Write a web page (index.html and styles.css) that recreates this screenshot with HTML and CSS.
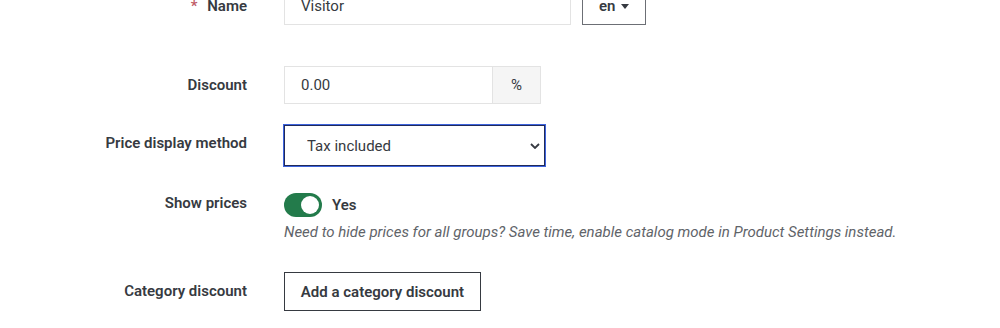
FILE: index.html
```html
<!DOCTYPE html>
<html lang="en">

<head>
    <meta charset="UTF-8">
    <title>Customer group</title>
    <link rel="stylesheet" href="styles.css">
</head>

<body>
    <form class="group-form">
        <div class="form-group form-group-name">
            <label class="control-label" for="name"><span class="required">*</span> Name</label>
            <div class="control">
                <input type="text" id="name" class="form-control input-name" value="Visitor">
                <button type="button" class="btn-lang">en <span class="caret"></span></button>
            </div>
        </div>

        <div class="form-group">
            <label class="control-label" for="discount">Discount</label>
            <div class="control">
                <div class="input-group">
                    <input type="text" id="discount" class="form-control input-discount" value="0.00">
                    <span class="input-addon">%</span>
                </div>
            </div>
        </div>

        <div class="form-group form-group-select">
            <label class="control-label" for="price_display">Price display method</label>
            <div class="control">
                <div class="select-wrap">
                    <select id="price_display" class="form-select">
                        <option>Tax included</option>
                        <option>Tax excluded</option>
                    </select>
                    <svg class="chevron" width="10" height="6" viewBox="0 0 10 6">
                        <path d="M1 1l4 4 4-4" fill="none" stroke="#363a41" stroke-width="1.8" />
                    </svg>
                </div>
            </div>
        </div>

        <div class="form-group form-group-switch">
            <label class="control-label">Show prices</label>
            <div class="control">
                <div class="switch-row">
                    <span class="switch"><span class="knob"></span></span>
                    <span class="switch-label">Yes</span>
                </div>
                <p class="help">Need to hide prices for all groups? Save time, enable catalog mode in Product Settings instead.</p>
            </div>
        </div>

        <div class="form-group">
            <label class="control-label">Category discount</label>
            <div class="control">
                <button type="button" class="btn-outline">Add a category discount</button>
            </div>
        </div>
    </form>
</body>

</html>
```

FILE: styles.css
```css
body {
    margin: 0;
    background: #fff;
    font-family: Roboto, "Noto Sans", sans-serif;
    font-size: 15px;
    color: #363a41;
}

.group-form {
    margin-top: -13px;
}

.form-group {
    display: flex;
    margin-bottom: 20px;
}

.form-group-name {
    margin-bottom: 41px;
}

.form-group-select {
    margin-top: 21px;
    margin-bottom: 27px;
}

.form-group-switch {
    margin-bottom: 30px;
}

.control-label {
    width: 247px;
    flex-shrink: 0;
    padding-top: 9px;
    text-align: right;
    font-weight: 600;
    line-height: 20px;
    box-sizing: border-box;
}

.form-group-select .control-label {
    padding-top: 8px;
}

.form-group-switch .control-label {
    padding-top: 0;
}

.required {
    color: #c05c67;
    margin-right: 6px;
}

.control {
    margin-left: 37px;
}

.form-group-name .control {
    display: flex;
    gap: 11px;
}

.form-control {
    height: 38px;
    padding: 0 16px;
    border: 1px solid #e3e3e3;
    font: inherit;
    color: #363a41;
    box-sizing: border-box;
    outline: none;
}

.input-name {
    width: 287px;
}

.btn-lang {
    width: 64px;
    height: 38px;
    border: 1px solid #6c6f75;
    background: #fff;
    font: inherit;
    font-weight: 600;
    color: #363a41;
    padding: 0;
}

.caret {
    display: inline-block;
    width: 0;
    height: 0;
    margin-left: 2px;
    vertical-align: 2px;
    border-left: 4px solid transparent;
    border-right: 4px solid transparent;
    border-top: 5px solid #363a41;
}

.input-group {
    display: flex;
}

.input-discount {
    width: 209px;
}

.input-addon {
    width: 48px;
    height: 38px;
    display: flex;
    align-items: center;
    justify-content: center;
    background: #f5f5f5;
    border: 1px solid #e3e3e3;
    border-left: 0;
    box-sizing: border-box;
}

.select-wrap {
    position: relative;
    width: 261px;
}

.form-select {
    appearance: none;
    width: 100%;
    height: 41px;
    padding: 0 22px;
    border: 1px solid #202a5a;
    box-shadow: 0 0 0 1px #3d63dd;
    background: #fff;
    font: inherit;
    color: #363a41;
    outline: none;
}

.chevron {
    position: absolute;
    right: 5px;
    top: 18px;
    pointer-events: none;
}

.switch-row {
    display: flex;
    align-items: center;
    height: 24px;
}

.switch {
    position: relative;
    width: 38px;
    height: 24px;
    border-radius: 12px;
    background: #237b4b;
}

.knob {
    position: absolute;
    right: 3px;
    top: 3px;
    width: 18px;
    height: 18px;
    border-radius: 50%;
    background: #fff;
}

.switch-label {
    margin-left: 10px;
    font-weight: 600;
}

.help {
    margin: 5px 0 0;
    font-style: italic;
    color: #5f6469;
    line-height: 20px;
}

.btn-outline {
    height: 39px;
    width: 197px;
    border: 1px solid #363a41;
    background: #fff;
    font: inherit;
    font-weight: 600;
    color: #363a41;
    padding: 0;
}
```
